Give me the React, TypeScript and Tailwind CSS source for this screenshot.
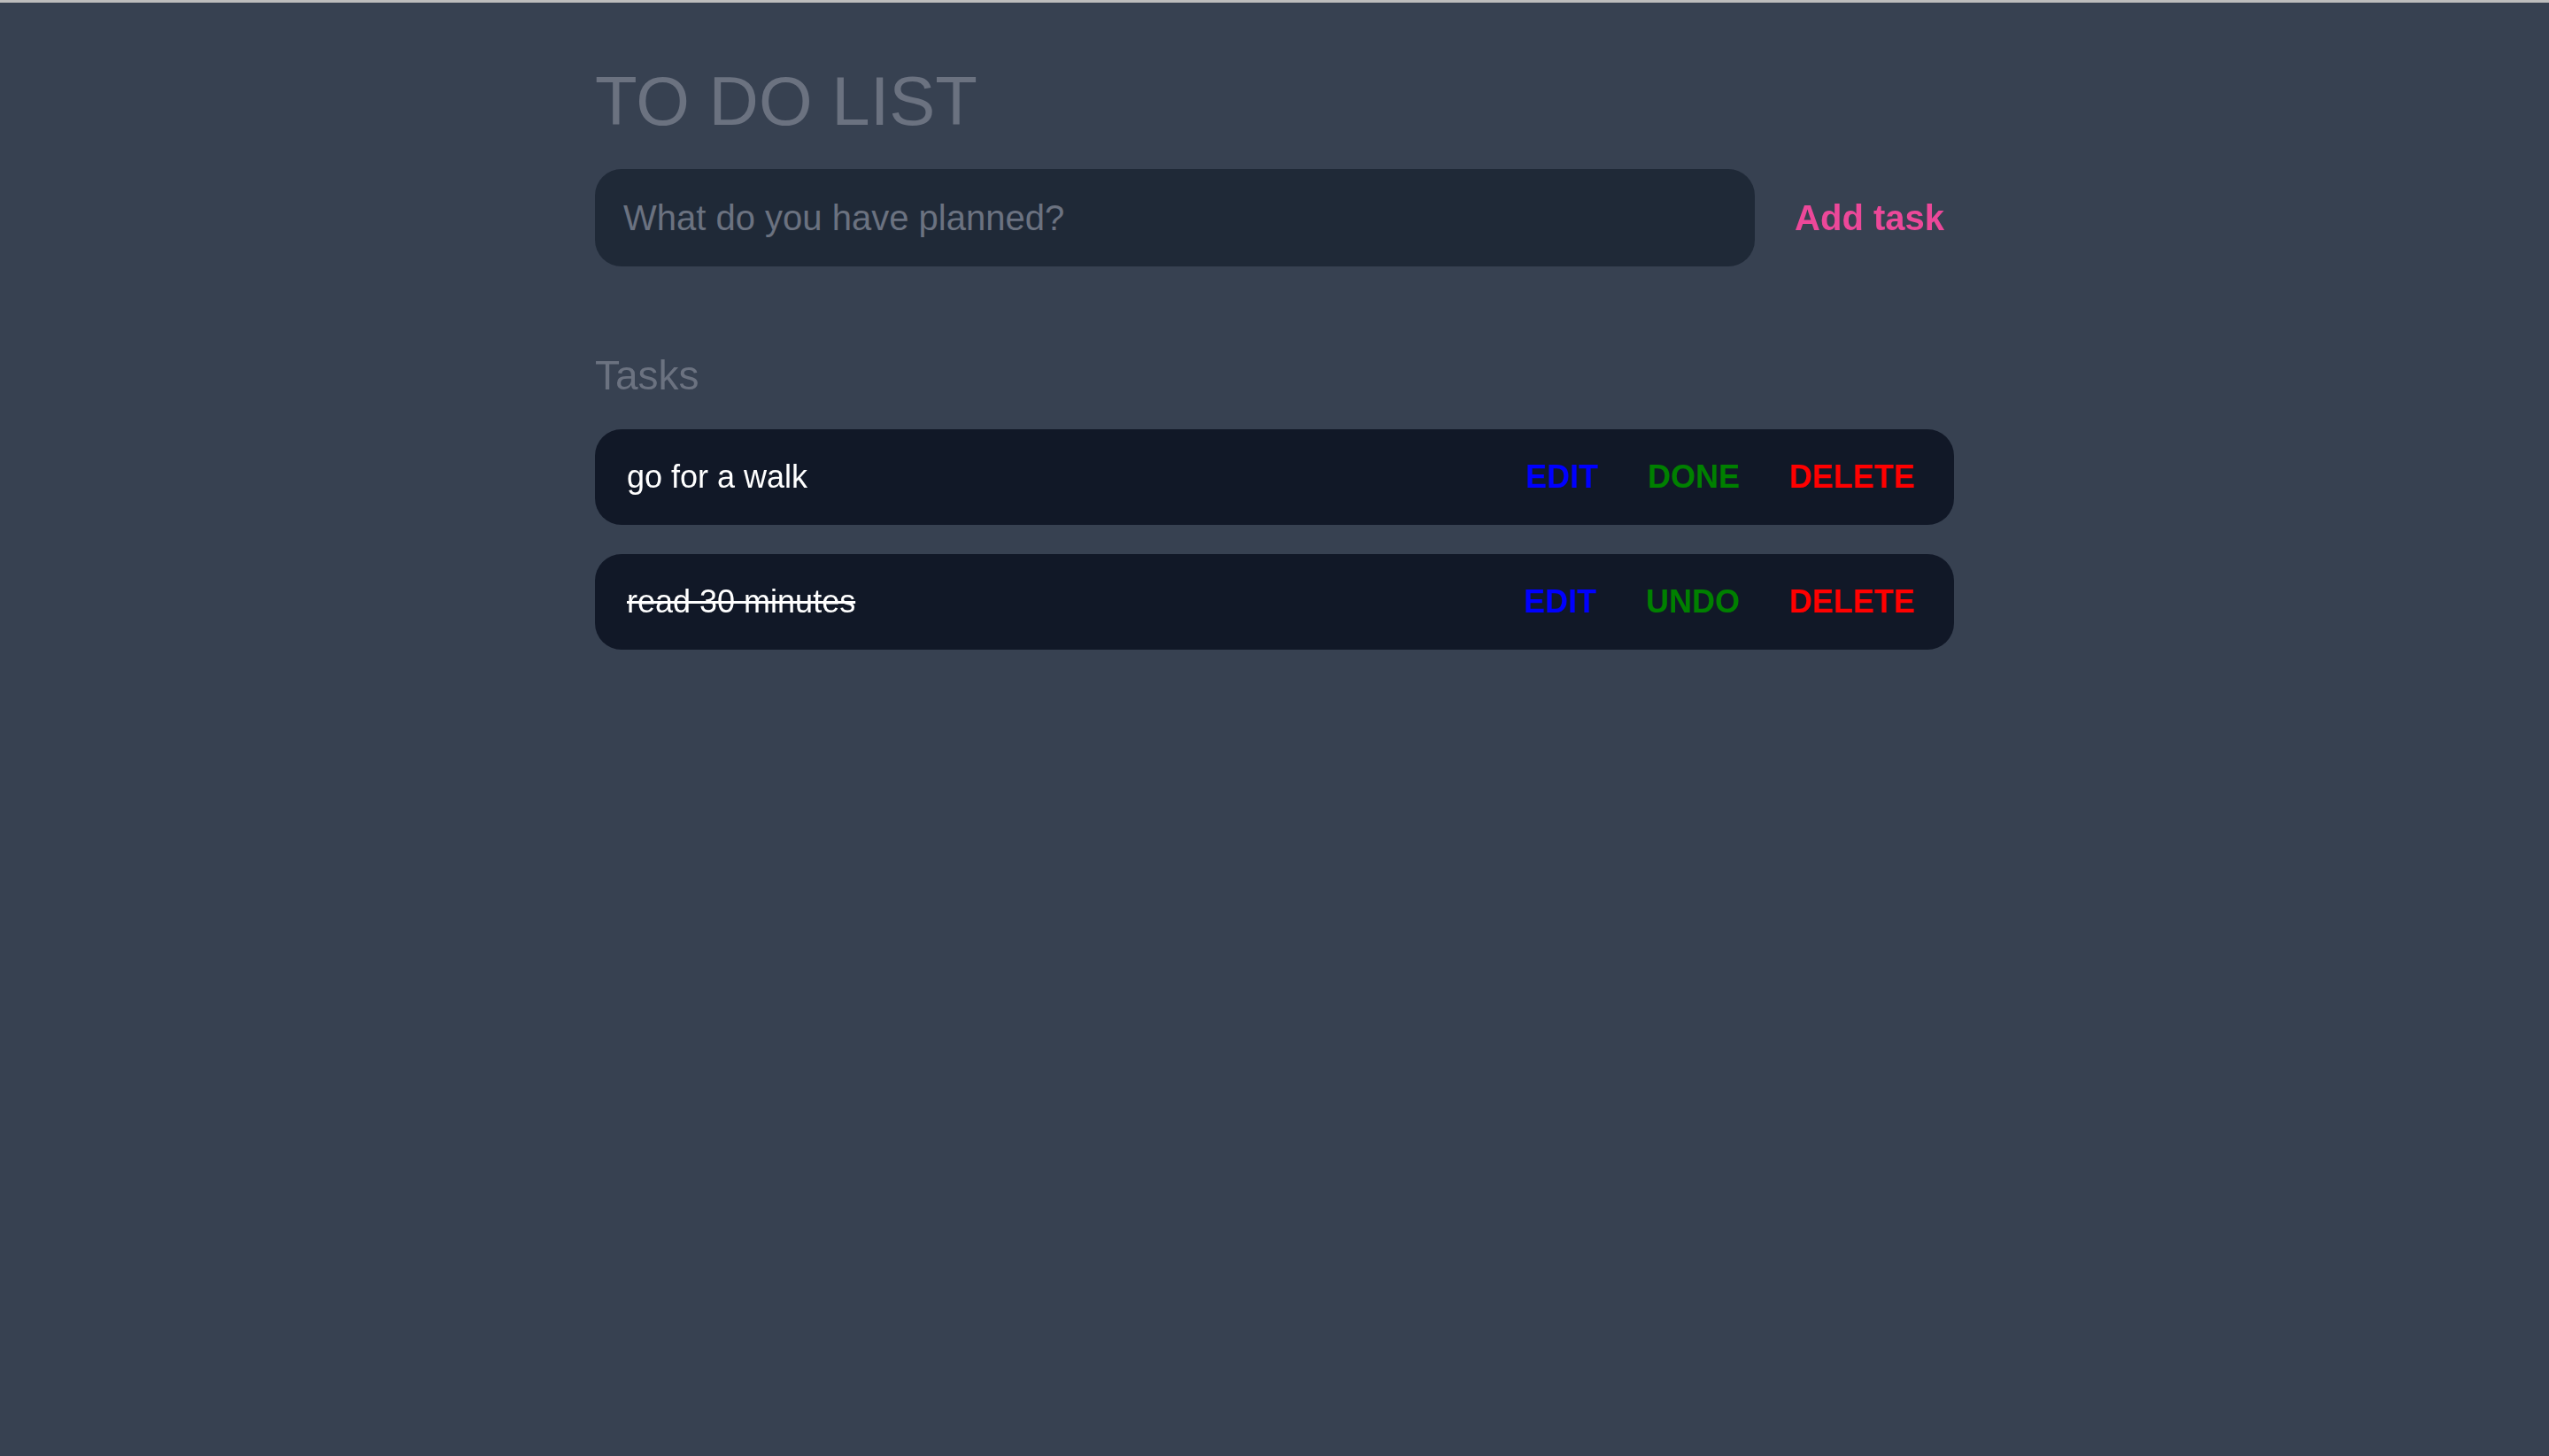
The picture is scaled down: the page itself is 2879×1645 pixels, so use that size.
import { useState } from "react";

interface Task {
  id: number;
  text: string;
  done: boolean;
}

const initialTasks: Task[] = [
  { id: 1, text: "go for a walk", done: false },
  { id: 2, text: "read 30 minutes", done: true },
];

export default function App() {
  const [tasks, setTasks] = useState<Task[]>(initialTasks);
  const [input, setInput] = useState("");

  function addTask() {
    if (!input.trim()) return;
    setTasks([...tasks, { id: Date.now(), text: input.trim(), done: false }]);
    setInput("");
  }

  function toggle(id: number) {
    setTasks(tasks.map(t => (t.id === id ? { ...t, done: !t.done } : t)));
  }

  function remove(id: number) {
    setTasks(tasks.filter(t => t.id !== id));
  }

  return (
    <div className="min-h-screen bg-[#374151] font-['Liberation_Sans',Arial,sans-serif]">
      <div className="h-[3px] bg-[#bdbdbd]" />
      <div className="mx-auto w-[1535px] pt-[72px]">
        <h1 className="text-[78px] leading-none text-[#6b7280]">TO DO LIST</h1>

        <div className="mt-[38px] flex items-center gap-[34px]">
          <input
            autoFocus
            value={input}
            onChange={e => setInput(e.target.value)}
            onKeyDown={e => e.key === "Enter" && addTask()}
            placeholder="What do you have planned?"
            className="h-[110px] flex-1 rounded-[30px] bg-[#1f2937] pl-[32px] pr-8 text-[40px] text-gray-100 caret-white placeholder:text-[#6b7280] focus:outline-none"
          />
          <button onClick={addTask} className="px-[11px] text-[40px] font-bold text-[#ec4899]">
            Add task
          </button>
        </div>

        <h2 className="mt-[100px] text-[46px] leading-none text-[#6b7280]">Tasks</h2>

        <div className="mt-[38px] flex flex-col gap-[33px]">
          {tasks.map(task => (
            <div
              key={task.id}
              className="flex h-[108px] items-center justify-between rounded-[30px] bg-[#111827] pl-[36px] pr-[44px]"
            >
              <span className={`text-[36px] text-white ${task.done ? "line-through" : ""}`}>{task.text}</span>
              <div className="flex items-center gap-[56px] text-[36px] font-bold">
                <button className="text-[#0000ff]">EDIT</button>
                <button onClick={() => toggle(task.id)} className="text-[#008000]">
                  {task.done ? "UNDO" : "DONE"}
                </button>
                <button onClick={() => remove(task.id)} className="text-[#ff0000]">DELETE</button>
              </div>
            </div>
          ))}
        </div>
      </div>
    </div>
  );
}
